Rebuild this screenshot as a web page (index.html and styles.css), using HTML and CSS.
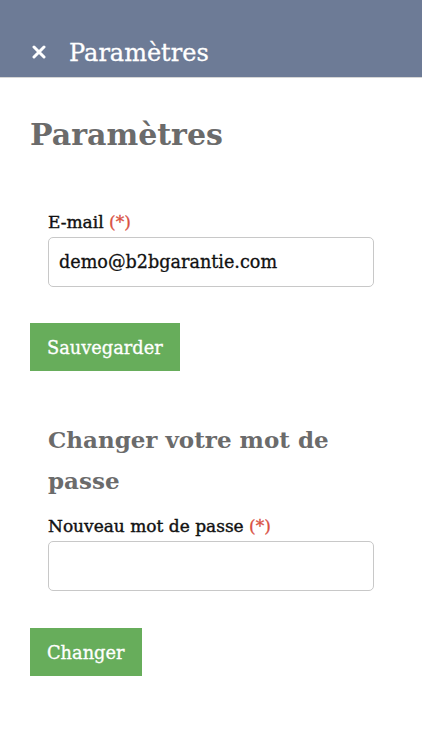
FILE: index.html
```html
<!DOCTYPE html>
<html lang="fr">
<head>
    <meta charset="UTF-8">
    <meta name="viewport" content="width=device-width, initial-scale=1.0">
    <title>Paramètres</title>
    <link rel="stylesheet" href="styles.css">
</head>
<body>
    <div class="topbar">
        <span class="close">
            <svg width="14" height="14" viewBox="0 0 14 14"><path d="M2 2 L12 12 M12 2 L2 12" stroke="#fff" stroke-width="3" stroke-linecap="round"/></svg>
        </span>
        <span class="topbar-title">Paramètres</span>
    </div>

    <div class="page">
        <h1>Paramètres</h1>

        <form class="block">
            <div class="field">
                <label for="email">E-mail <span class="req">(*)</span></label>
                <input type="text" id="email" value="demo@b2bgarantie.com">
            </div>
            <button type="button" class="btn">Sauvegarder</button>
        </form>

        <form class="block">
            <h2>Changer votre mot de passe</h2>
            <div class="field">
                <label for="pass">Nouveau mot de passe <span class="req">(*)</span></label>
                <input type="password" id="pass">
            </div>
            <button type="button" class="btn">Changer</button>
        </form>
    </div>
</body>
</html>
```

FILE: styles.css
```css
body {
    font-family: "DejaVu Serif", "Liberation Serif", serif;
    background: #fff;
    margin: 0;
    padding: 0;
    color: #111;
}
.topbar {
    background: #6d7b96;
    height: 78px;
    border-bottom: 1px solid #d6d6d6;
    display: flex;
    align-items: flex-end;
    padding: 0 0 10px 32px;
    box-sizing: border-box;
}
.close {
    width: 14px;
    height: 14px;
    display: flex;
    margin-bottom: 8px;
}
.topbar-title {
    color: #fff;
    font-size: 24px;
    margin-left: 23px;
    line-height: 28px;
    -webkit-text-stroke: 0.3px #fff;
}
.page {
    padding: 0 30px;
}
h1 {
    margin: 37px 0 0;
    font-size: 30px;
    line-height: 40px;
    color: #6b6b6b;
}
.block {
    margin: 0;
}
.field {
    padding: 0 18px;
    margin-top: 56px;
}
label {
    display: block;
    font-size: 17px;
    line-height: 22px;
    margin-bottom: 4px;
    -webkit-text-stroke: 0.4px #111;
}
.req {
    color: #d9503f;
    -webkit-text-stroke: 0.3px #d9503f;
}
input[type="text"], input[type="password"] {
    width: 100%;
    height: 50px;
    box-sizing: border-box;
    padding: 0 10px;
    border: 1px solid #c8c8c8;
    border-radius: 5px;
    font-family: inherit;
    font-size: 17.6px;
    color: #111;
    -webkit-text-stroke: 0.3px #111;
}
.btn {
    margin-top: 37px;
    background: #67ad5b;
    border: none;
    color: #fff;
    font-family: inherit;
    font-size: 17.8px;
    height: 48px;
    padding: 0 17px;
    -webkit-text-stroke: 0.3px #fff;
}
.block:first-of-type .btn {
    margin-top: 36px;
}
h2 {
    margin: 48px 18px 0;
    font-size: 23px;
    line-height: 41px;
    color: #6b6b6b;
}
h2 + .field {
    margin-top: 14px;
}
```
